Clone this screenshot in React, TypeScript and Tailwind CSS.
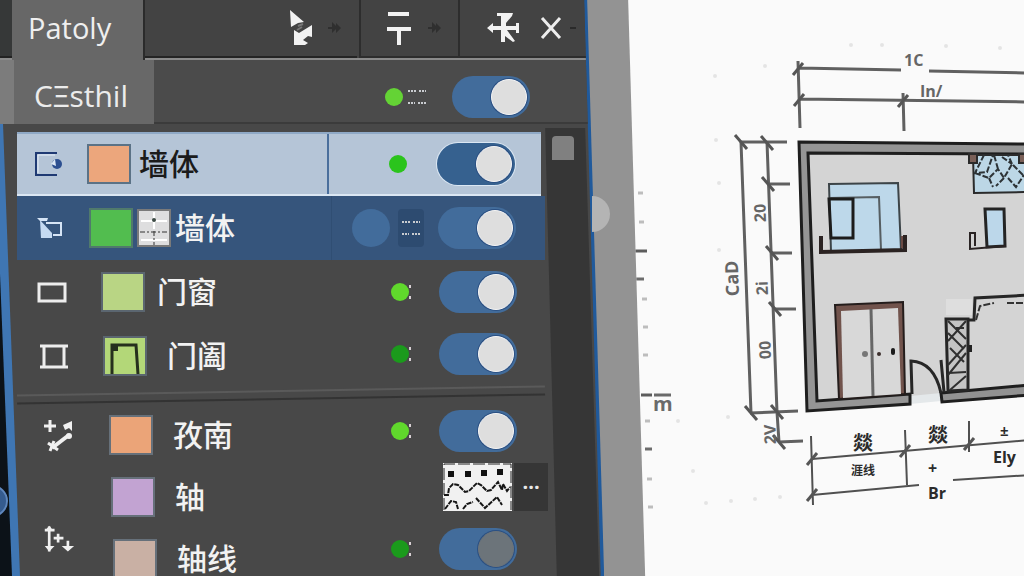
import React from "react";

type Status = "none" | "bright" | "green" | "dark" | "pattern";

interface Layer {
  id: string;
  name: string;
  icon: React.ReactNode;
  indent: string;
  swatch: string;
  gap: string;
  tone: string;
  controls: string;
  status: Status;
  preview?: React.ReactNode;
  knob?: string;
  track?: string;
}

const OpenBoxIcon = () => (
  <svg width="30" height="28" viewBox="0 0 30 28" fill="none">
    <path d="M24 3H3v22h21" stroke="#1f3a73" strokeWidth="2" />
    <path d="M5 5v18M5 5h17" stroke="#e8f0fa" strokeWidth="1" />
    <circle cx="24" cy="14" r="5" fill="#2c4f90" />
    <path d="M18 14l4-5 1 7z" fill="#dbe7f5" />
  </svg>
);

const FoldIcon = () => (
  <svg width="30" height="28" viewBox="0 0 30 28" fill="none">
    <path d="M2 4h11l-1 3H5z" fill="#d6e4f5" />
    <path d="M11 9h15v12H18" stroke="#d6e4f5" strokeWidth="2" />
    <path d="M5 6l12 13v5H6z" fill="#c5daf2" />
  </svg>
);

const RectIcon = () => (
  <svg width="30" height="28" viewBox="0 0 30 28" fill="none">
    <rect x="2" y="6" width="26" height="17" stroke="#ededed" strokeWidth="3" />
  </svg>
);

const FrameIcon = () => (
  <svg width="30" height="28" viewBox="0 0 30 28" fill="none">
    <path d="M1 4h28M1 25h28M5 4v21M25 4v21" stroke="#ededed" strokeWidth="3" />
  </svg>
);

const ExpandIcon = () => (
  <svg width="32" height="36" viewBox="0 0 32 36" fill="none">
    <path d="M1 9h12M7 3v12" stroke="#f0f0f0" strokeWidth="3" />
    <path d="M9 31 26 18" stroke="#f0f0f0" strokeWidth="4" />
    <path d="M5 26l10 7M7 34l4-10" stroke="#f0f0f0" strokeWidth="3" />
    <path d="M20 8l9-4v10l-3-3-4 2z" fill="#f0f0f0" />
    <circle cx="26" cy="19" r="3" fill="#f0f0f0" />
  </svg>
);

const AxisIcon = () => (
  <svg width="36" height="32" viewBox="0 0 36 32" fill="none">
    <path d="M7 2v28M2 6h11M12 15h11M17 10v10M28 18v10" stroke="#f0f0f0" strokeWidth="3" />
    <path d="M2 24h11l-6 6zM21 24h14l-7 6zM3 6l4-5 4 5z" fill="#f0f0f0" />
  </svg>
);

const GridPreview = () => (
  <svg width="34" height="38" viewBox="0 0 34 38" fill="none">
    <rect x="1" y="1" width="32" height="36" fill="#dededf" stroke="#7a7a7a" strokeWidth="2" />
    <path d="M17 3v17M4 12h26M4 31h26" stroke="#fff" strokeWidth="2" />
    <path d="M3 23h28M17 22v14" stroke="#333" strokeWidth="1" strokeDasharray="5 2 2 2" />
    <circle cx="17" cy="11" r="2" fill="#3c4a44" />
  </svg>
);

const DoorPreview = () => (
  <svg className="h-full w-full" viewBox="0 0 40 36" fill="none">
    <path d="M7 36V7h24l2 29" stroke="#26301d" strokeWidth="3" />
    <path d="M7 7h6v6H7z" fill="#26301d" />
  </svg>
);

const LinePreview = () => (
  <svg width="69" height="48" viewBox="0 0 69 48" fill="none">
    <rect width="69" height="48" fill="#f1f1f1" />
    <g fill="#111">
      <path d="M5 8h6v6H5zM22 8h6v6h-6zM38 7h6v6h-6zM54 6h6v6h-6z" />
    </g>
    <path
      d="M1 32h4l1-7 4-4 5 1 7 7 4-1 8-8 4 2 6 6 4-1 7-8 4 8 1-6 4 7 3-4M2 46l6-8 5 1 2 7M20 46l4-5 6-2M33 35l9 10 12-11 5 8"
      stroke="#151515"
      strokeWidth="2"
      strokeDasharray="5 1"
    />
    <path d="M1 47V1h67v46" stroke="#222" strokeDasharray="12 3" />
  </svg>
);

const Marks = () => (
  <svg width="20" height="18" viewBox="0 0 20 18">
    <path
      d="M1 3h8M12 3h7M1 15h7M11 15h8"
      stroke="#c9ccd0"
      strokeWidth="2"
      strokeDasharray="2 1"
    />
  </svg>
);

const Toggle = ({
  label,
  knob = "bg-[#dedede] border-[#f5f5f5]",
  track = "bg-[#426c9b]",
  checked = true,
}: {
  label: string;
  knob?: string;
  track?: string;
  checked?: boolean;
}) => (
  <label className={`relative flex h-[42px] w-[78px] shrink-0 items-center justify-end rounded-full pr-[3px] ${track}`}>
    <input
      type="checkbox"
      aria-label={label}
      defaultChecked={checked}
      className="absolute inset-0 cursor-pointer opacity-0"
    />
    <span className={`h-9 w-9 rounded-full border ring-1 ring-[#2b5083] ${knob}`}></span>
  </label>
);

const Indicator = ({ status }: { status: Status }) => {
  if (status === "none") return <div className="w-[108px] shrink-0"></div>;
  if (status === "pattern") {
    return (
      <div className="flex w-[106px] shrink-0 items-center gap-2 pl-5">
        <span className="h-[38px] w-[38px] rounded-full bg-[#426c9b]"></span>
        <span className="flex h-[38px] w-[26px] items-center justify-center rounded bg-[#2d4b70]">
          <Marks />
        </span>
      </div>
    );
  }
  const color =
    status === "bright" ? "bg-[#60d82c]" : status === "green" ? "bg-[#2bc41c]" : "bg-[#1b9a1c]";
  return (
    <div className="flex w-[108px] shrink-0 items-center pl-[60px]">
      <span className={`h-[18px] w-[18px] rounded-full ${color}`}></span>
      {status !== "green" && (
        <span className="flex flex-col gap-2">
          <span className="h-[3px] w-[2px] bg-[#d8d0d4]"></span>
          <span className="h-[3px] w-[2px] bg-[#d8d0d4]"></span>
        </span>
      )}
    </div>
  );
};

const upper: Layer[] = [
  {
    id: "wall",
    name: "墙体",
    icon: <OpenBoxIcon />,
    indent: "pl-4",
    swatch: "bg-[#eca67c] border-[#5b7286]",
    gap: "gap-[22px]",
    tone: "mr-1 border-y-2 border-[#dbe7f3] border-t-[#8fa9c6] bg-[#b5c5d7] text-[#1b1b1b]",
    controls: "border-l-2 border-[#4a6f9c]",
    status: "green",
    track: "bg-[#36618f] ring-1 ring-[#dbe7f3]",
  },
  {
    id: "wall-hatch",
    name: "墙体",
    icon: <FoldIcon />,
    indent: "pl-[18px]",
    swatch: "bg-[#52bd4f] border-[#507a6c]",
    gap: "gap-[22px]",
    tone: "bg-[#36557c] text-[#f2f2f2]",
    controls: "border-l border-[#304e73]",
    status: "pattern",
    preview: <GridPreview />,
  },
  {
    id: "window",
    name: "门窗",
    icon: <RectIcon />,
    indent: "pl-5",
    swatch: "bg-[#b9d584] border-[#5b6670]",
    gap: "gap-8",
    tone: "text-[#f2f2f2]",
    controls: "",
    status: "bright",
  },
  {
    id: "door",
    name: "门阖",
    icon: <FrameIcon />,
    indent: "pl-[22px]",
    swatch: "bg-[#b3d778] border-[#5b6670]",
    gap: "gap-8",
    tone: "text-[#f2f2f2]",
    controls: "pb-1",
    status: "dark",
  },
];

const lower: Layer[] = [
  {
    id: "south",
    name: "孜南",
    icon: <ExpandIcon />,
    indent: "pl-[26px]",
    swatch: "bg-[#eba478] border-[#66707a]",
    gap: "gap-[34px]",
    tone: "text-[#f2f2f2]",
    controls: "pb-2",
    status: "bright",
  },
  {
    id: "axis",
    name: "轴",
    icon: null,
    indent: "pl-[26px]",
    swatch: "bg-[#c2a3d2] border-[#66707a]",
    gap: "gap-9",
    tone: "text-[#f2f2f2]",
    controls: "pb-5",
    status: "none",
  },
  {
    id: "axis-line",
    name: "轴线",
    icon: <AxisIcon />,
    indent: "pl-[26px]",
    swatch: "bg-[#c9b0a4] border-[#66707a]",
    gap: "gap-[38px]",
    tone: "text-[#f2f2f2]",
    controls: "pb-5",
    status: "dark",
    knob: "bg-[#6c747a] border-[#6c747a]",
  },
];

const LayerRow = ({ layer, height }: { layer: Layer; height: string }) => (
  <li className={`flex items-center ${height} ${layer.tone}`}>
    <div className={`flex min-w-0 flex-1 items-center ${layer.indent} ${layer.gap}`}>
      <span
        className={`flex w-8 shrink-0 ${layer.id === "axis-line" ? "-mt-4 self-start" : ""}`}
      >
        {layer.icon}
      </span>
      <div className="flex items-center gap-1">
        <span className={`h-10 w-11 shrink-0 border-2 ${layer.swatch}`}>
          {layer.id === "door" && <DoorPreview />}
        </span>
        {layer.preview}
        <span
          className={`whitespace-nowrap text-[30px] font-medium leading-9 ${
            layer.preview ? "" : layer.id === "wall" ? "pl-1" : layer.id === "window" ? "pl-2" : "pl-4"
          }`}
        >
          {layer.name}
        </span>
      </div>
    </div>
    <div className={`flex h-full w-[214px] shrink-0 items-center ${layer.controls}`}>
      <Indicator status={layer.status} />
      {layer.status === "none" ? (
        <div className="flex items-center gap-[2px] pl-1">
          <LinePreview />
          <button className="h-12 w-[34px] bg-[#363636] text-xl font-bold leading-6 text-[#e8e8e8]" aria-label="更多">
            ···
          </button>
        </div>
      ) : (
        <Toggle
          label={layer.name}
          knob={layer.knob}
          track={layer.track}
          checked={!layer.knob}
        />
      )}
    </div>
  </li>
);

const Toolbar = () => (
  <header className="flex h-[60px] border-b-2 border-[#8b8b8b] bg-[#434343]">
    <div className="w-3 shrink-0 border-b-2 border-[#222] bg-[#363838]"></div>
    <div className="-mb-[2px] flex w-[133px] shrink-0 items-center border-r-2 border-[#2b2b2b] bg-[#676767] pb-1 pl-4 text-[29px] leading-9 text-[#efefef]">
      Patoly
    </div>
    <div className="flex flex-1 items-center justify-end gap-3 border-b-2 border-[#242424] pr-4">
      <button aria-label="选择">
        <svg width="26" height="40" viewBox="0 0 26 40" fill="#f2f2f2">
          <path d="M1 2l14 12-6 1-7 4z" />
          <path d="M23 17v12l-4-1-5 4 5 3-3 2H5V22l5 3z" />
          <path d="M9 18l5-2M8 22l5-3" stroke="#777" strokeWidth="2" />
        </svg>
      </button>
      <svg width="14" height="14" viewBox="0 0 14 14" fill="#2f2f2f">
        <path d="M1 6h4V1l4 4V2l5 5-5 5V8l-4 4V8H1z" />
      </svg>
    </div>
    <div className="ml-[2px] flex w-[101px] items-center gap-4 border-x-2 border-b-2 border-[#2d2d2d] pl-6">
      <button aria-label="对齐">
        <svg width="26" height="36" viewBox="0 0 26 36" fill="none" stroke="#f2f2f2">
          <path d="M3 4h21M2 19h24" strokeWidth="4" />
          <path d="M14 19v16" strokeWidth="4" />
        </svg>
      </button>
      <svg width="14" height="14" viewBox="0 0 14 14" fill="#2f2f2f">
        <path d="M1 6h4V1l4 4V2l5 5-5 5V8l-4 4V8H1z" />
      </svg>
    </div>
    <div className="flex w-[144px] items-center gap-5 border-b-2 border-[#2d2d2d] pl-[26px]">
      <button aria-label="移动">
        <svg width="34" height="34" viewBox="0 0 34 34" fill="#f2f2f2">
          <path d="M11 2h16l-1 3-6 7v3h10v-3h3v10h-3v-3h-9l8 11-2 1-8-6v6h-4V19H7v3l-6-5 6-5v3h8V5h-4z" />
        </svg>
      </button>
      <button aria-label="关闭">
        <svg width="22" height="22" viewBox="0 0 22 22" fill="none" stroke="#ededed" strokeWidth="3">
          <path d="M2 1l18 20M20 1 2 21" />
        </svg>
      </button>
      <span className="-ml-3 h-[2px] w-[6px] bg-[#2a2a2a]"></span>
    </div>
  </header>
);

const Panel = () => (
  <aside className="flex w-[59%] shrink-0 flex-col overflow-hidden bg-[#205a9c] [clip-path:polygon(0_0,calc(100%-17px)_0,100%_100%,0_100%)]">
    <div className="flex flex-1 flex-col bg-[#484848] [clip-path:polygon(0_0,calc(100%-20px)_0,calc(100%-3px)_100%,0_100%)]">
      <Toolbar />
      <div className="flex h-16 items-center border-b-2 border-[#3b3b3b] bg-[#4b4b4b]">
        <div className="-mb-[2px] h-16 w-[14px] shrink-0 bg-[#7c7c7c]"></div>
        <h1 className="-mb-[2px] flex h-16 w-[140px] shrink-0 items-center bg-[#686868] pb-1 pl-5 pt-3 text-[30px] leading-9 text-[#ececec]">
          CΞsthil
        </h1>
        <div className="flex flex-1 items-center justify-end pr-[74px] pt-3">
          <span className="h-[18px] w-[18px] rounded-full bg-[#64d335]"></span>
          <span className="ml-1 mr-[25px]">
            <Marks />
          </span>
          <Toggle label="CΞsthil" />
        </div>
      </div>
      <div className="relative flex pl-[17px]">
        <div className="absolute inset-y-0 left-0 w-5 bg-[#3f76b3] [clip-path:polygon(0_0,3px_0,20px_452px,20px_100%,0_100%)]"></div>
        <div className="absolute inset-y-0 left-0 w-5 overflow-hidden bg-[#0c1218] [clip-path:polygon(0_150px,12px_452px,12px_100%,0_100%)]">
          <span className="absolute -left-6 top-[361px] h-8 w-8 rounded-full border-2 border-[#5f87bd] bg-[#355b8e]"></span>
        </div>
        <div className="flex-1 pt-2">
          <ul>
            {upper.map((layer) => (
              <LayerRow key={layer.id} layer={layer} height="h-16" />
            ))}
          </ul>
          <div className="h-4 py-[2px]">
            <hr className="h-[10px] -rotate-1 border-y-2 border-b-[#333] border-t-[#5a5a5a]" />
          </div>
          <ul>
            {lower.map((layer) => (
              <LayerRow key={layer.id} layer={layer} height="h-[62px]" />
            ))}
          </ul>
        </div>
        <div className="mt-1 flex w-[59px] shrink-0 bg-[#363636] pl-[7px] pt-2 [clip-path:polygon(0_0,40px_0,54px_448px,54px_100%,12px_100%)]">
          <div className="h-6 w-[22px] rounded-t bg-[#808080]"></div>
        </div>
      </div>
    </div>
  </aside>
);

const slashes = [
  [798, 69], [799, 100], [903, 101], [812, 459], [905, 451], [969, 444], [812, 495],
];

const backslashes = [
  [741, 142], [767, 143], [768, 184], [772, 253], [775, 309], [751, 413], [777, 412], [779, 442],
];

const rulerMarks = [
  [638, 193], [639, 222], [642, 299], [643, 327], [643, 355], [645, 421], [647, 479], [648, 507],
];

const paperDots = [
  [765, 66], [715, 76], [851, 45], [882, 45], [946, 46], [719, 250], [719, 183], [693, 471],
  [678, 421], [706, 503], [731, 501], [755, 499], [780, 497], [728, 417], [716, 140], [1000, 48],
];

const FloorPlan = () => (
  <svg
    className="h-full w-full"
    viewBox="628 0 396 576"
    preserveAspectRatio="xMinYMin slice"
    fill="none"
    fontFamily='"Open Sans", "Noto Sans CJK SC", sans-serif'
  >
    <g fill="#e4e4e4">
      {paperDots.map(([x, y]) => (
        <circle key={`${x}-${y}`} cx={x} cy={y} r="2" />
      ))}
    </g>
    <path d="M634 251h13M641 395h11" stroke="#5c5c5c" strokeWidth="3" />
    <path d="M636 279h8M645 449h7" stroke="#6c6c6c" strokeWidth="3" />
    <g stroke="#bdbdbd" strokeWidth="3">
      {rulerMarks.map(([x, y]) => (
        <path key={y} d={`M${x} ${y}h5`} />
      ))}
    </g>
    <path d="M654 395h17" stroke="#6a6a6a" strokeWidth="3" />
    <text x="653" y="411" fontSize="20" fontWeight="700" fill="#6a6a6a">m</text>

    <path d="M799 141 1030 143V386L941 394 910 398 910 404 807 411z" fill="#d4d4d4" />
    <path d="M910 396 941 393v8l-31 3z" fill="#e4e8ea" />
    <path
      d="M799 142 1030 144V154L808 153 817 401 910 394V404L807 411z"
      fill="#959595"
      stroke="#1e1e1e"
      strokeWidth="3"
    />
    <path d="M941 393 1030 385V395L942 402z" fill="#929292" stroke="#1e1e1e" strokeWidth="3" />

    <path d="M829 184 898 183 901 250 831 252z" fill="#bdd8ea" stroke="#3c4448" strokeWidth="2" />
    <path d="M830 198 879 197 881 250" stroke="#565e62" strokeWidth="2" />
    <path d="M829 199h24v39h-22z" stroke="#1c1c1c" strokeWidth="3" />
    <path d="M821 236v16l84-2v-15" stroke="#2b2322" strokeWidth="4" />
    <path d="M902 236v12" stroke="#6b4a44" strokeWidth="2" />

    <path d="M973 155h57v37l-56 1z" fill="#bcd7e6" stroke="#2b2b2b" strokeWidth="2" />
    <path
      d="M984 155l-9 18 12-1 6-17M975 173l14 5 9-9 6 9 8-14 12 12M998 169l-4-14M1004 178l-8 8M989 178l4 9M1012 164l-4-9M1008 178l8 9 8-12M1002 157l10 7"
      stroke="#2d3336"
      strokeWidth="2"
      strokeDasharray="6 2"
    />
    <path d="M969 154h8v9h-8zM1019 154h8v9h-8z" fill="#7a6058" stroke="#2a2a2a" strokeWidth="2" />
    <path d="M985 209h19l1 37-18 1z" fill="#bcd7ea" stroke="#242424" strokeWidth="3" />
    <path d="M976 233h-6v16l36-3M975 234v12" stroke="#2a2424" strokeWidth="2" />

    <path d="M835 305 903 302 905 394 839 399z" fill="#71534c" stroke="#241d1c" strokeWidth="2" />
    <path d="M841 311 898 308 901 394 843 398z" fill="#d8d8d8" />
    <path d="M871 309 873 396" stroke="#666" strokeWidth="3" />
    <circle cx="865" cy="354" r="3" fill="#777" />
    <circle cx="879" cy="354" r="2" fill="#3c2f2c" />
    <rect x="891" y="348" width="4" height="7" rx="2" fill="#1c1c1c" />

    <path d="M912 394 911 361Q934 362 941 393M941 360l3 32" stroke="#262626" strokeWidth="3" />
    <path d="M946 299h26v16h-26z" fill="#dedede" />
    <path d="M946 319h22v71l-20 1z" fill="#c4c4c4" stroke="#262626" strokeWidth="3" />
    <path
      d="M948 321l18 18M966 321l-18 20M948 333l16 16M966 345l-18 20M966 353l-18 22M950 348l14 14M949 373l17-1M966 376l-16 14M956 328h8"
      stroke="#303030"
      strokeWidth="2"
    />
    <path d="M968 320h6l1-22 55-3" stroke="#262626" strokeWidth="3" />
    <path d="M976 320l4-14 14-3M1007 303h20" stroke="#333" strokeWidth="2" strokeDasharray="7 2" />
    <rect x="969" y="345" width="3" height="7" fill="#222" />

    <g stroke="#606060" strokeWidth="3">
      <path d="M798 61 800 128M799 68 901 70M929 71 1030 73M799 99 1030 102M903 93 904 131" />
      <path d="M741 142 751 413M767 142 777 412 779 442M741 142h46M768 184h22M772 253h20M775 309h21M750 413 798 411M779 442 803 441" />
      <path
        d="M811 436 813 505M905 430 907 485M969 421v31M812 459 1030 440M812 495 919 485M953 480 1030 475"
        stroke="#505050"
        strokeWidth="2"
      />
    </g>
    <g stroke="#555" strokeWidth="3">
      {slashes.map(([x, y]) => (
        <path key={`${x}-${y}`} d={`M${x - 5} ${y + 6}l10 -12`} />
      ))}
      {backslashes.map(([x, y]) => (
        <path key={`${x}-${y}`} d={`M${x - 6} ${y - 7}l12 14`} />
      ))}
    </g>

    <g fill="#666" fontWeight="700" fontSize="16">
      <text x="904" y="66">1C</text>
      <text x="920" y="97">In/</text>
      <text transform="translate(766 222) rotate(-92)">20</text>
      <text transform="translate(739 296) rotate(-92)" fontSize="18">CaD</text>
      <text transform="translate(768 295) rotate(-92)">2i</text>
      <text transform="translate(771 359) rotate(-92)">00</text>
      <text transform="translate(776 444) rotate(-92)">2V</text>
    </g>
    <g fill="#2b2b2b" fontWeight="700">
      <text x="853" y="450" fontSize="20">燚</text>
      <text x="928" y="442" fontSize="20">燚</text>
      <text x="851" y="475" fontSize="12">涯线</text>
      <text x="1000" y="436" fontSize="15">±</text>
      <text x="993" y="463" fontSize="16">Ely</text>
      <text x="928" y="474" fontSize="16">+</text>
      <text x="928" y="499" fontSize="16">Br</text>
    </g>
  </svg>
);

const App: React.FC = () => {
  return (
    <div className="flex h-screen overflow-hidden bg-[#939393] font-['Open_Sans','Noto_Sans_CJK_SC',sans-serif]">
      <Panel />
      <div className="relative w-6 shrink-0">
        <span className="absolute -left-3 top-[196px] h-9 w-[18px] rounded-r-full bg-[#b4b4b4]"></span>
      </div>
      <main className="min-w-0 flex-1 bg-[#fafafa] [clip-path:polygon(0_0,100%_0,100%_100%,17px_100%)]">
        <FloorPlan />
      </main>
    </div>
  );
};

export default App;
